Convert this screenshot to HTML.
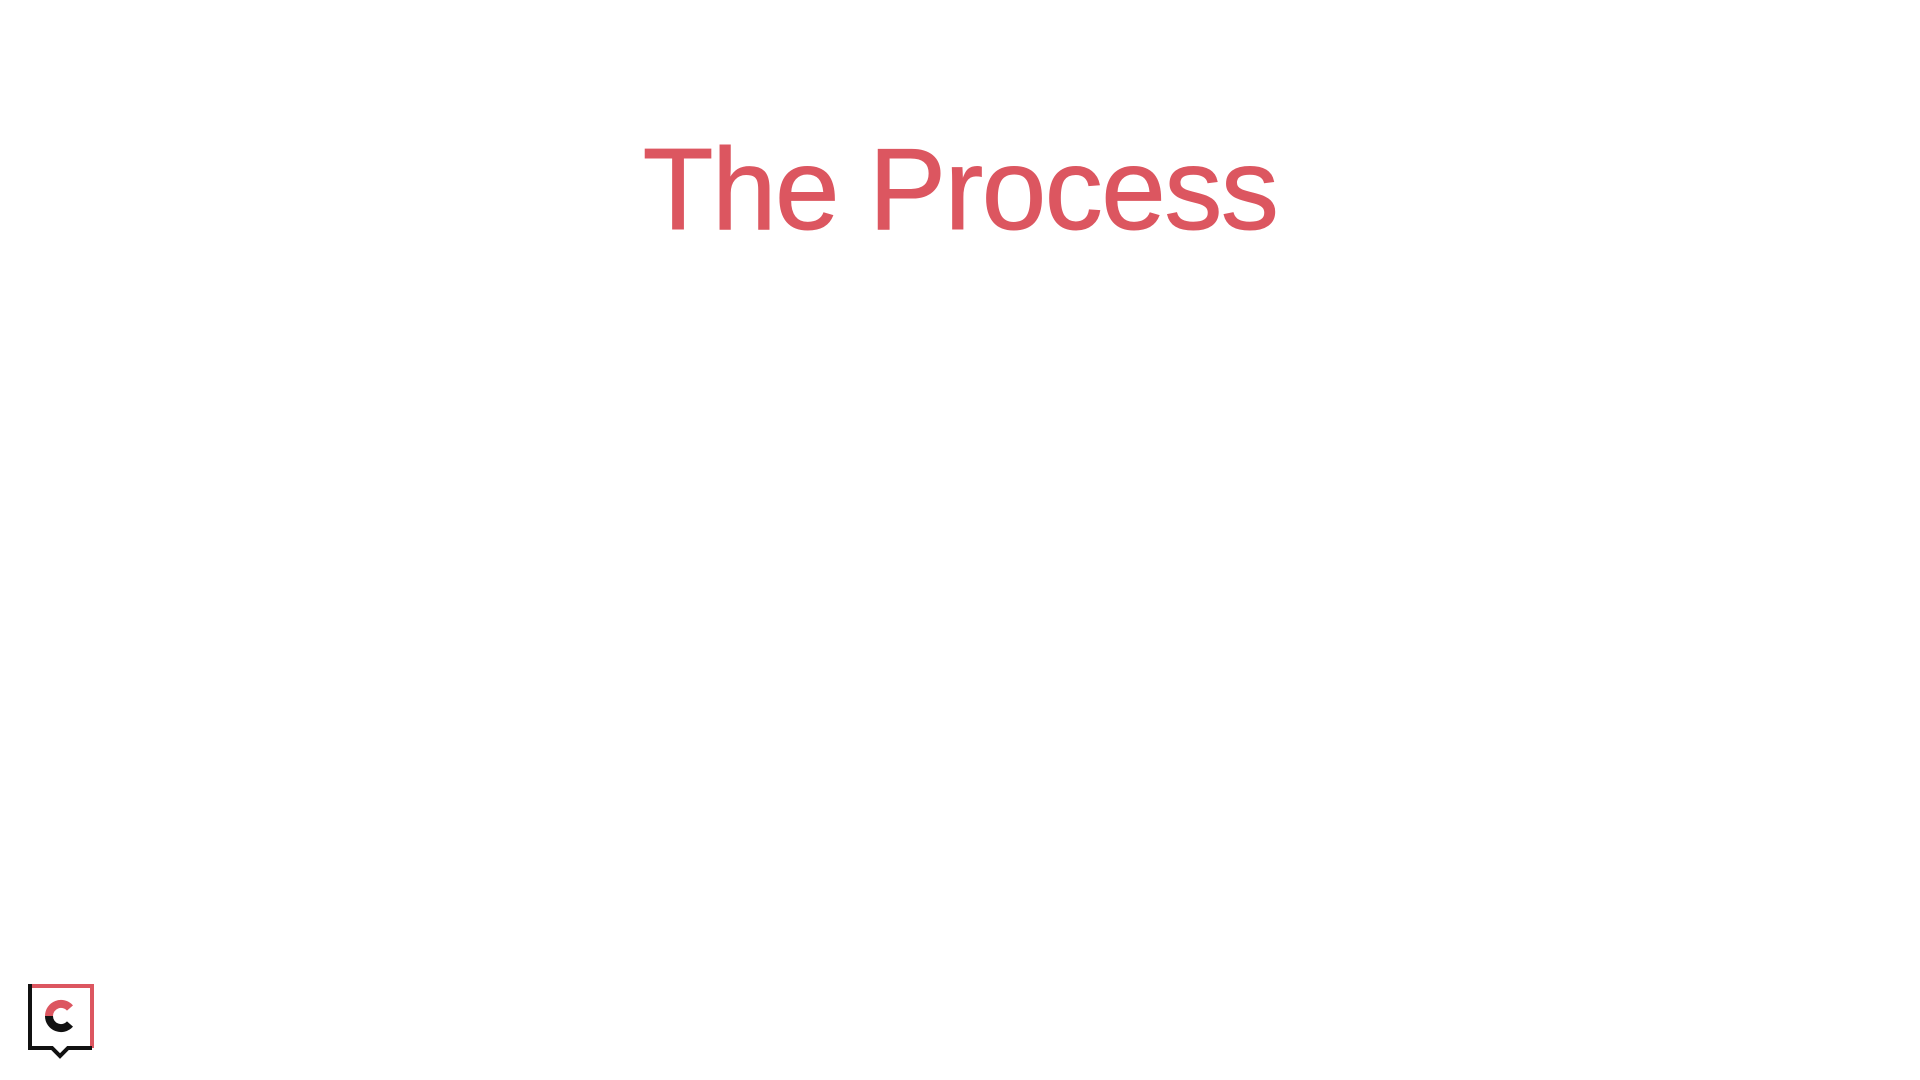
<!DOCTYPE html>
<html><head><meta charset="utf-8"><style>
html,body{margin:0;width:1920px;height:1080px;background:#fff;overflow:hidden}
h1{position:absolute;left:0;width:1920px;top:124px;margin:0;text-align:center;font-family:"Liberation Sans",sans-serif;font-weight:normal;font-size:116px;line-height:130px;color:#dc5660;letter-spacing:-1.5px;-webkit-text-stroke:1px #dc5660}
svg{position:absolute;left:26px;top:982px}
</style></head><body>
<h1>The Process</h1>
<svg width="72" height="80" viewBox="0 0 72 80">
<path d="M4 4 H66 V66" fill="none" stroke="#dc5660" stroke-width="4"/>
<path d="M4 2 V66 H26 L34 74 L42 66 H66" fill="none" stroke="#111" stroke-width="4"/>
<path d="M23 34 A12 12 0 0 1 44 26" fill="none" stroke="#dc5660" stroke-width="8"/>
<path d="M23 34 A12 12 0 0 0 44 42" fill="none" stroke="#111" stroke-width="8"/>
</svg>
</body></html>
